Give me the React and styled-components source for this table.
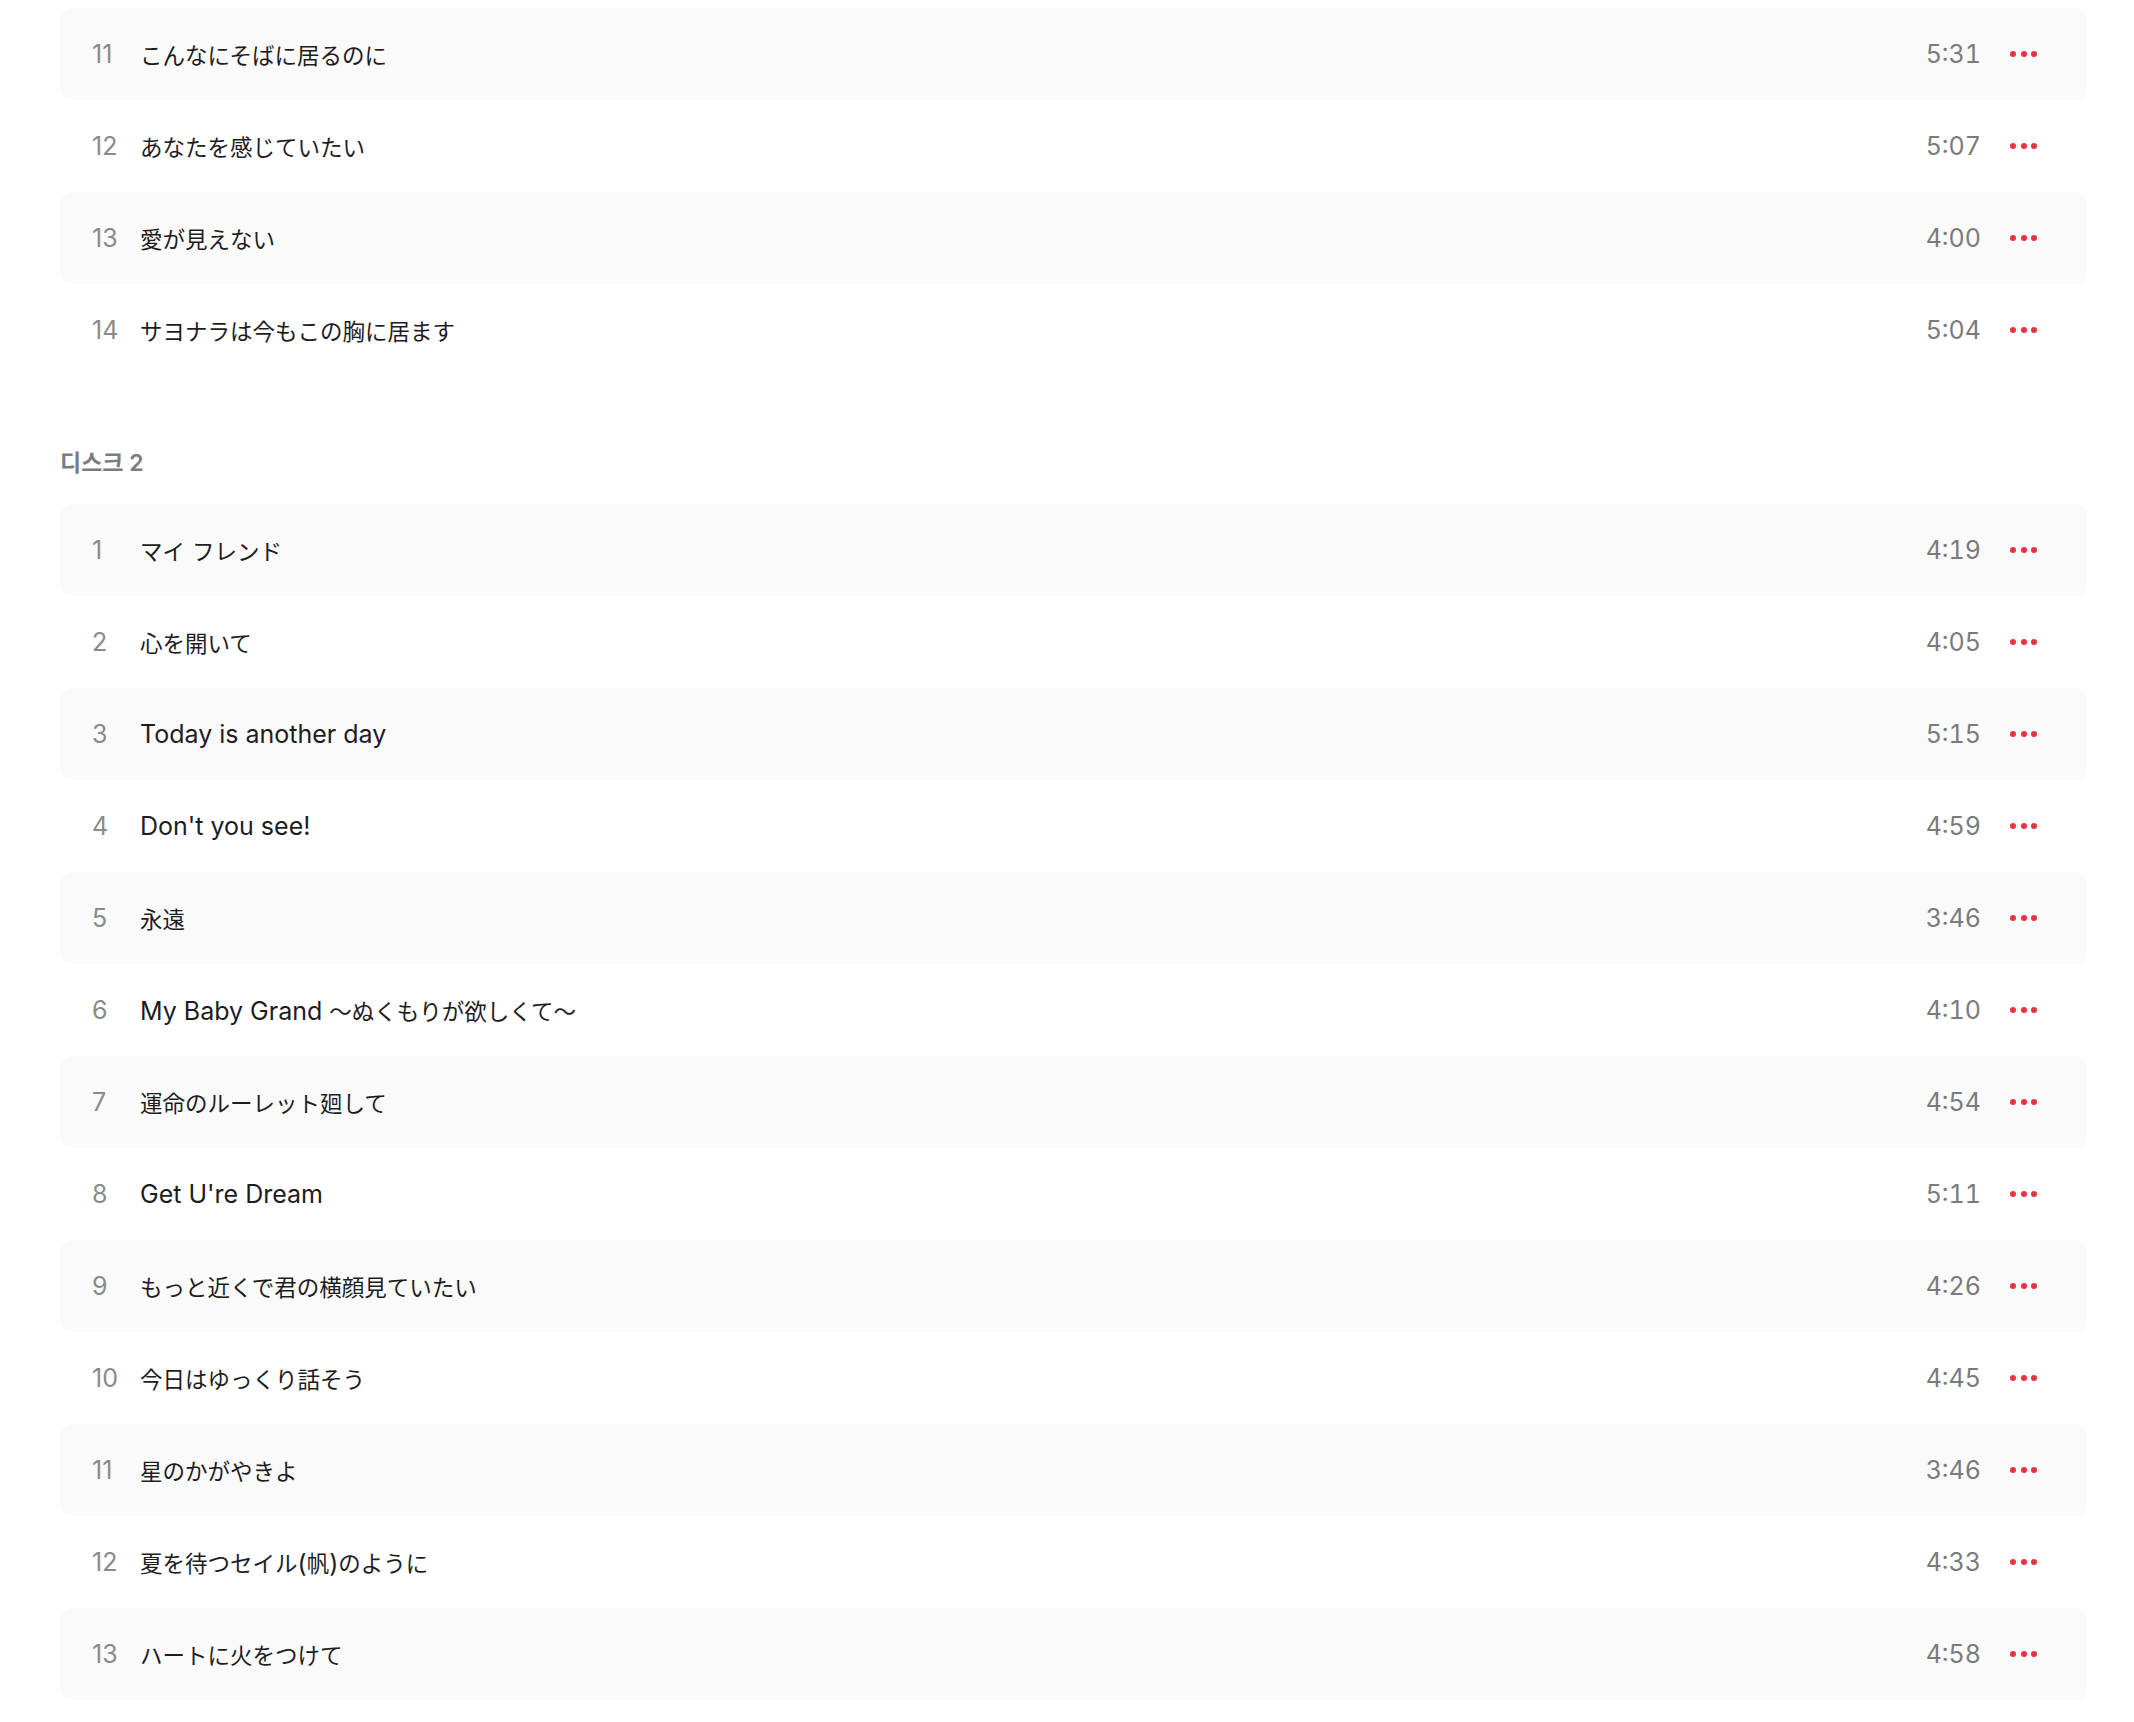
import React from 'react';
import styled, { createGlobalStyle } from 'styled-components';

const GlobalStyle = createGlobalStyle`
  html, body {
    margin: 0;
    padding: 0;
    background: #ffffff;
  }

  body {
    font-family: Inter, 'Noto Sans CJK JP', 'Noto Sans', sans-serif;
    -webkit-font-smoothing: antialiased;
  }
`;

const StyledPage = styled.main`
  padding: 8px 47px 40px 60px;
`;

const StyledDisc = styled.section`
  & + & {
    margin-top: 71px;
  }
`;

const StyledDiscTitle = styled.h2`
  margin: 0 0 25px;
  font-family: Inter, 'Noto Sans CJK KR', sans-serif;
  font-size: 23px;
  line-height: 32px;
  font-weight: 600;
  color: #7c7c7c;
`;

const StyledList = styled.ol`
  margin: 0;
  padding: 0;
  list-style: none;
`;

const StyledRow = styled.li`
  display: flex;
  align-items: center;
  height: 92px;
  padding: 0 50px 0 32px;
  border-radius: 12px;
  background: ${({ $striped }) => ($striped ? '#fafafa' : 'transparent')};
`;

const StyledNumber = styled.span`
  flex: 0 0 48px;
  font-size: 25px;
  color: #8a8a8a;
`;

const StyledTitle = styled.span`
  flex: 1;
  font-family: Inter, 'Noto Sans CJK JP', sans-serif;
  font-size: 25px;
  color: #1d1d1f;
  white-space: nowrap;
  overflow: hidden;
  text-overflow: ellipsis;
`;

// CJK runs render a touch smaller than the latin ones in the original
const StyledCjk = styled.span`
  font-family: 'Noto Sans CJK JP', sans-serif;
  font-size: 22.5px;
`;

const StyledTime = styled.span`
  font-size: 25px;
  color: #7b7b7b;
  font-variant-numeric: tabular-nums;
`;

const StyledMore = styled.button`
  display: flex;
  align-items: center;
  gap: 4.5px;
  margin-left: 29px;
  padding: 0;
  border: 0;
  background: none;
  cursor: pointer;

  span {
    width: 6px;
    height: 6px;
    border-radius: 50%;
    background: #e8333f;
  }
`;

const discs = [
  {
    title: null,
    tracks: [
      [11, 'こんなにそばに居るのに', '5:31'],
      [12, 'あなたを感じていたい', '5:07'],
      [13, '愛が見えない', '4:00'],
      [14, 'サヨナラは今もこの胸に居ます', '5:04'],
    ],
  },
  {
    title: '디스크 2',
    tracks: [
      [1, 'マイ フレンド', '4:19'],
      [2, '心を開いて', '4:05'],
      [3, 'Today is another day', '5:15'],
      [4, "Don't you see!", '4:59'],
      [5, '永遠', '3:46'],
      [6, 'My Baby Grand ～ぬくもりが欲しくて～', '4:10'],
      [7, '運命のルーレット廻して', '4:54'],
      [8, "Get U're Dream", '5:11'],
      [9, 'もっと近くで君の横顔見ていたい', '4:26'],
      [10, '今日はゆっくり話そう', '4:45'],
      [11, '星のかがやきよ', '3:46'],
      [12, '夏を待つセイル(帆)のように', '4:33'],
      [13, 'ハートに火をつけて', '4:58'],
    ],
  },
];

const cjkRun = /([\u3000-\u30ff\u3400-\u9fff\uff00-\uffef]+)/;

const TrackTitle = ({ text }) => (
  <StyledTitle>
    {text.split(cjkRun).map((part, i) =>
      i % 2 === 1 ? <StyledCjk key={i}>{part}</StyledCjk> : part,
    )}
  </StyledTitle>
);

const App = () => (
  <>
    <GlobalStyle />
    <StyledPage>
      {discs.map((disc, d) => (
        <StyledDisc key={d}>
          {disc.title && <StyledDiscTitle>{disc.title}</StyledDiscTitle>}
          <StyledList>
            {disc.tracks.map(([num, title, time], i) => (
              <StyledRow key={num} $striped={i % 2 === 0}>
                <StyledNumber>{num}</StyledNumber>
                <TrackTitle text={title} />
                <StyledTime>{time}</StyledTime>
                <StyledMore aria-label="더 보기">
                  <span />
                  <span />
                  <span />
                </StyledMore>
              </StyledRow>
            ))}
          </StyledList>
        </StyledDisc>
      ))}
    </StyledPage>
  </>
);

export default App;
